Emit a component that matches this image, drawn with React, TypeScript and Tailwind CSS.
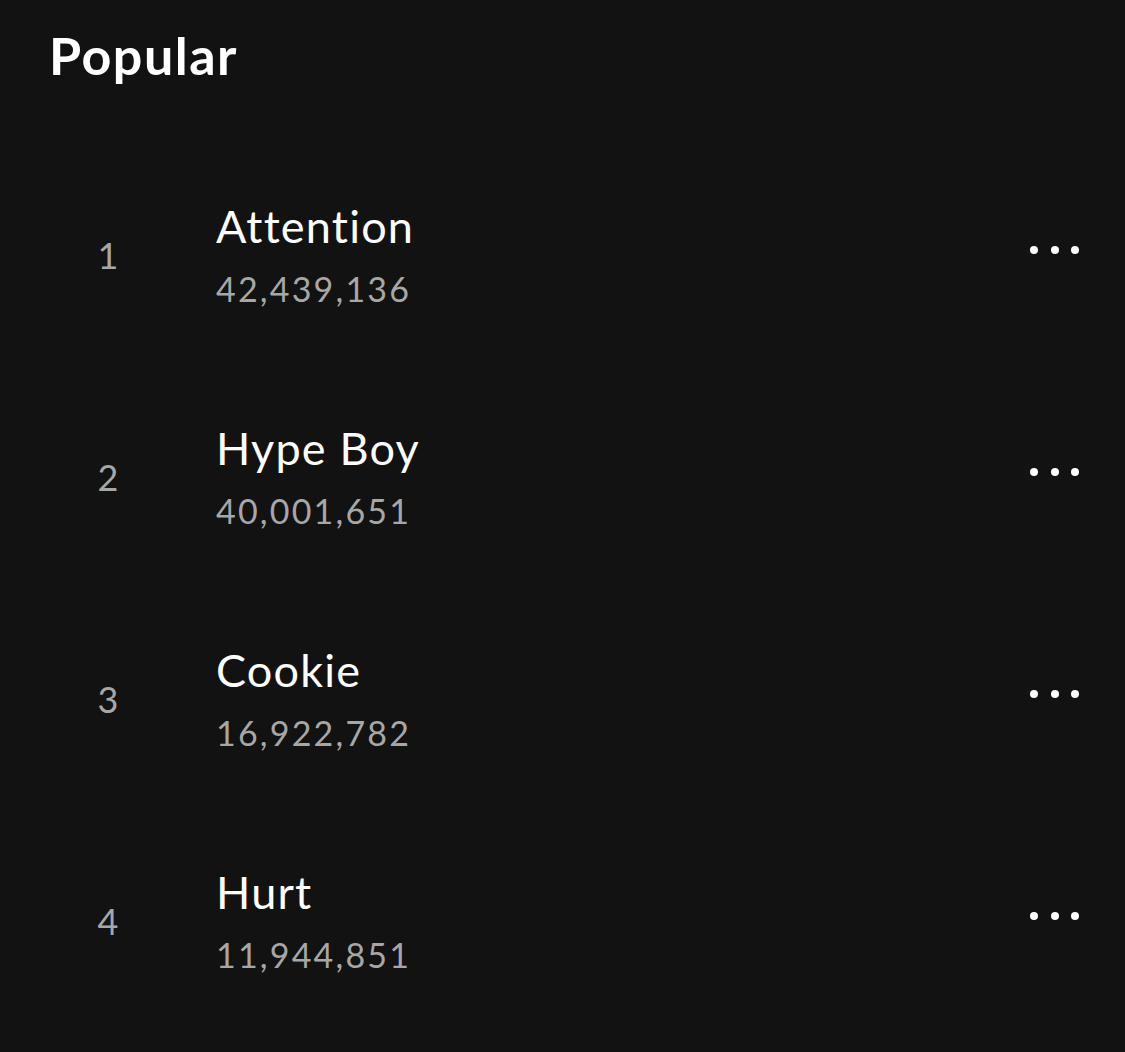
const tracks = [
  { rank: 1, title: "Attention", plays: "42,439,136" },
  { rank: 2, title: "Hype Boy", plays: "40,001,651" },
  { rank: 3, title: "Cookie", plays: "16,922,782" },
  { rank: 4, title: "Hurt", plays: "11,944,851" },
];

const MoreDots = () => (
  <svg width="52" height="10" viewBox="0 0 52 10" fill="white">
    <circle cx="5" cy="5" r="4" />
    <circle cx="26" cy="5" r="4" />
    <circle cx="46" cy="5" r="4" />
  </svg>
);

export default function App() {
  return (
    <div
      className="w-[1125px] h-[1052px] bg-[#121212] text-white overflow-hidden"
      style={{ fontFamily: "Lato, 'Noto Sans', sans-serif" }}
    >
      <h2 className="pl-[49px] pt-[20px] h-[147px] text-[52px] font-bold leading-[70px] tracking-[1.5px]">
        Popular
      </h2>
      <ul>
        {tracks.map((t) => (
          <li key={t.rank} className="flex items-center h-[222px]">
            <div className="w-[216px] flex justify-center pb-[6px]">
              <span className="text-[#a7a7a7] text-[36px]">{t.rank}</span>
            </div>
            <div className="flex-1 flex flex-col pb-[4px]">
              <span className="text-[45px] leading-[56px] tracking-[1.2px] mb-[10px]">{t.title}</span>
              <span className="text-[34px] leading-[50px] tracking-[2.2px] text-[#a7a7a7]">{t.plays}</span>
            </div>
            <div className="pr-[44px] -mt-[16px]">
              <MoreDots />
            </div>
          </li>
        ))}
      </ul>
    </div>
  );
}
